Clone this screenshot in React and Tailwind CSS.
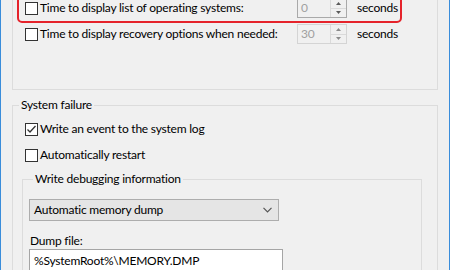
import React from "react";

const font = { fontFamily: 'Lato, "Segoe UI", sans-serif' };

function CheckBox({ checked }) {
  return (
    <span className="flex h-[13px] w-[13px] shrink-0 items-center justify-center border border-[#333333] bg-white">
      {checked && (
        <svg width="11" height="11" viewBox="0 0 11 11">
          <path d="M1.5 5.5 L4 8 L9.5 2" fill="none" stroke="#333333" strokeWidth="1.3" />
        </svg>
      )}
    </span>
  );
}

function Spinner({ value, dark }) {
  const border = dark ? "border-[#a9a9a9]" : "border-[#d4d4d4]";
  const arrow = dark ? "#5a5a5a" : "#8a8a8a";
  return (
    <div className={`flex h-[20px] w-[50px] border ${border} bg-[#f0f0f0]`}>
      <div className="flex flex-1 items-center pl-[3px] text-[12px] leading-none text-[#a0a0a0]">
        {value}
      </div>
      <div className="flex w-[16px] flex-col border-l border-[#dadada]">
        <div className="flex flex-1 items-center justify-center border-b border-[#dadada]">
          <svg width="5" height="3" viewBox="0 0 5 3">
            <path d="M0 3 L2.5 0 L5 3 Z" fill={arrow} />
          </svg>
        </div>
        <div className="flex flex-1 items-center justify-center">
          <svg width="5" height="3" viewBox="0 0 5 3">
            <path d="M0 0 L2.5 3 L5 0 Z" fill={arrow} />
          </svg>
        </div>
      </div>
    </div>
  );
}

function TimeRow({ label, value, dark }) {
  return (
    <div className="flex h-[20px] items-center">
      <CheckBox />
      <span className="ml-[2px] w-[257px] whitespace-nowrap text-[12px] text-black">{label}</span>
      <Spinner value={value} dark={dark} />
      <span className="ml-[10px] text-[12px] text-black">seconds</span>
    </div>
  );
}

function CheckRow({ label, checked }) {
  return (
    <div className="flex h-[20px] items-center pl-[12px]">
      <CheckBox checked={checked} />
      <span className="ml-[2px] whitespace-nowrap text-[12px] text-black">{label}</span>
    </div>
  );
}

export default function App() {
  return (
    <div
      className="h-[270px] w-[450px] overflow-hidden border-x border-[#3a8ddb] bg-[#f0f0f0] leading-[16px] tracking-[-0.22px]"
      style={font}
    >
      <div className="px-[11px]">
        {/* Startup group (top cut off) */}
        <div className="mt-[-40px] border border-[#dcdcdc] pt-[33px] pb-[45px]">
          <div className="ml-[4px] w-[385px] rounded-[5px] border-2 border-[#e5232b] pt-[2px] pb-[3px] pl-[6px]">
            <TimeRow label="Time to display list of operating systems:" value="0" dark />
          </div>
          <div className="mt-[1px] pl-[12px]">
            <TimeRow label="Time to display recovery options when needed:" value="30" />
          </div>
        </div>

        {/* System failure */}
        <fieldset className="mt-[7px] h-[200px] border border-[#dcdcdc]">
          <legend className="ml-[6px] px-[2px] text-[12px] leading-[16px] text-black">
            System failure
          </legend>
          <div className="mt-[6px] flex flex-col gap-[6px]">
            <CheckRow label="Write an event to the system log" checked />
            <CheckRow label="Automatically restart" />
          </div>

          <fieldset className="mt-[6px] ml-[9px] h-[120px] w-[400px] border border-[#dcdcdc] pl-[6px]">
            <legend className="ml-[4px] px-[2px] text-[12px] leading-[16px] text-black">
              Write debugging information
            </legend>
            <div className="mt-[12px] flex h-[22px] w-[250px] items-center justify-between border border-[#adadad] bg-[#e5e5e5] pr-[6px] pl-[4px]">
              <span className="text-[12px] text-black">Automatic memory dump</span>
              <svg width="9" height="6" viewBox="0 0 9 6">
                <path d="M0.5 0.8 L4.5 4.8 L8.5 0.8" fill="none" stroke="#555555" strokeWidth="1.2" />
              </svg>
            </div>
            <div className="mt-[12px] pl-[1px] text-[12px] text-black">Dump file:</div>
            <div className="flex h-[23px] w-[254px] items-center border border-[#a5a5a5] bg-white pl-[4px] text-[12px] text-black">
              %SystemRoot%\MEMORY.DMP
            </div>
          </fieldset>
        </fieldset>
      </div>
    </div>
  );
}
